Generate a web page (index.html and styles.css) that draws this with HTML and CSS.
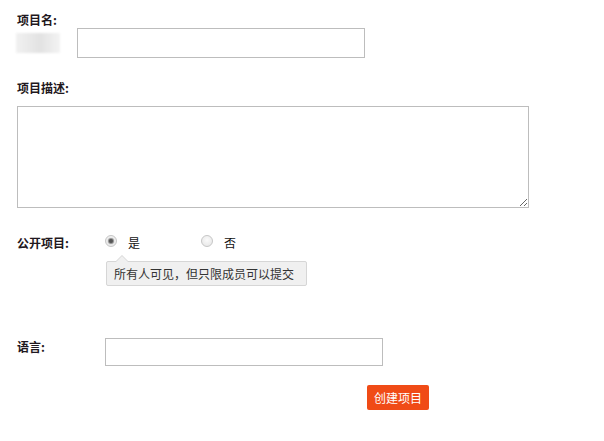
FILE: index.html
```html
<!DOCTYPE html>
<html lang="zh">
<head>
<meta charset="utf-8">
<title>创建项目</title>
<link rel="stylesheet" href="styles.css">
</head>
<body>
<form class="form">
  <div class="field field-name">
    <div class="label">项目名:</div>
    <div class="name-row">
      <span class="blur"></span>
      <input class="input input-name" type="text">
    </div>
  </div>

  <div class="field field-desc">
    <div class="label">项目描述:</div>
    <textarea class="textarea"></textarea>
  </div>

  <div class="field field-public">
    <div class="label label-col">公开项目:</div>
    <div class="public-body">
      <div class="radios">
        <label class="radio-item radio-yes"><span class="radio checked"></span><span class="radio-text">是</span></label>
        <label class="radio-item"><span class="radio"></span><span class="radio-text">否</span></label>
      </div>
      <div class="tip">所有人可见，但只限成员可以提交</div>
    </div>
  </div>

  <div class="field field-lang">
    <div class="label label-col">语言:</div>
    <input class="input input-lang" type="text">
  </div>

  <div class="actions">
    <button class="btn" type="button">创建项目</button>
  </div>
</form>
</body>
</html>
```
FILE: styles.css
```css
html, body {
  margin: 0;
  padding: 0;
  background: #fff;
}
body {
  font-family: "Noto Sans CJK SC", "Noto Sans", sans-serif;
  font-size: 12px;
  color: #222;
}
.form {
  padding: 13px 0 0 17px;
}
.label {
  font-weight: bold;
  font-size: 12px;
  line-height: 14px;
  color: #1f1820;
}
.name-row {
  display: flex;
  align-items: center;
  margin-top: 1px;
}
.blur {
  width: 44px;
  height: 20px;
  margin-left: -1px;
  background: linear-gradient(90deg, #f1f1f1 0%, #e9e9e9 30%, #e2e2e2 55%, #ececec 80%, #f3f3f3 100%);
  filter: blur(1px);
}
.input {
  box-sizing: border-box;
  border: 1px solid #bdbdbd;
  background: #fff;
  outline: none;
  padding: 0 4px;
  font: inherit;
}
.input-name {
  width: 288px;
  height: 30px;
  margin-left: 17px;
}
.field-desc {
  margin-top: 23px;
}
.textarea {
  display: block;
  box-sizing: border-box;
  width: 512px;
  height: 102px;
  margin-top: 11px;
  border: 1px solid #bdbdbd;
  outline: none;
  font: inherit;
  padding: 2px;
}
.field-public {
  display: flex;
  margin-top: 26px;
}
.label-col {
  width: 88px;
  flex: none;
  padding-top: 2px;
}
.radios {
  display: flex;
  height: 14px;
  align-items: center;
}
.radio-item {
  display: flex;
  align-items: center;
}
.radio-yes {
  width: 96px;
}
.radio {
  box-sizing: border-box;
  width: 12px;
  height: 12px;
  border-radius: 50%;
  border: 1px solid #c6c6c6;
  background: radial-gradient(circle at 50% 40%, #fafafa 0%, #e4e4e4 100%);
  display: flex;
  align-items: center;
  justify-content: center;
}
.radio.checked::after {
  content: "";
  width: 4px;
  height: 4px;
  border-radius: 50%;
  background: #555;
  box-shadow: 0 0 1px 1px #888;
}
.radio-text {
  margin-left: 11px;
  margin-top: 3px;
  font-size: 12px;
  line-height: 14px;
  color: #111;
}
.tip {
  position: relative;
  margin-top: 13px;
  margin-left: 1px;
  box-sizing: border-box;
  width: 201px;
  height: 25px;
  line-height: 23px;
  padding-left: 7px;
  background: #f0f0f0;
  border: 1px solid #d6d6d6;
  border-radius: 2px;
  color: #333;
  font-size: 12px;
  white-space: nowrap;
}
.tip::before,
.tip::after {
  content: "";
  position: absolute;
  left: 9px;
  width: 0;
  height: 0;
  border-left: 6px solid transparent;
  border-right: 6px solid transparent;
}
.tip::before {
  top: -7px;
  border-bottom: 6px solid #d6d6d6;
}
.tip::after {
  top: -6px;
  border-bottom: 6px solid #f0f0f0;
}
.field-lang {
  display: flex;
  margin-top: 52px;
}
.field-lang .label-col {
  padding-top: 2px;
}
.input-lang {
  width: 278px;
  height: 28px;
}
.actions {
  display: flex;
  margin-top: 19px;
  padding-left: 350px;
}
.btn {
  width: 62px;
  height: 25px;
  padding: 0;
  border: none;
  border-radius: 2px;
  background: #f04b16;
  color: #fff;
  font-family: "Noto Sans CJK SC", "Noto Sans", sans-serif;
  font-size: 12px;
  line-height: 25px;
  cursor: pointer;
}
```
